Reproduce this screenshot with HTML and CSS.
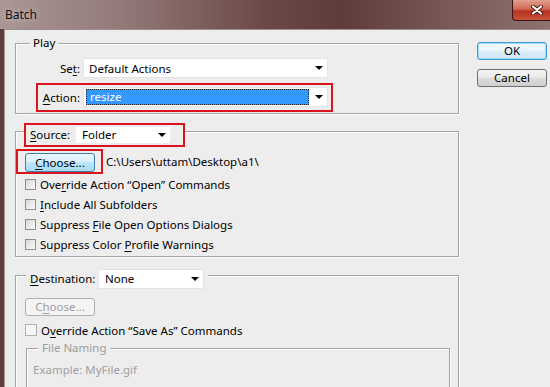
FILE: index.html
```html
<!DOCTYPE html>
<html lang="en">
<head>
  <meta charset="UTF-8" />
  <meta name="viewport" content="width=device-width, initial-scale=1.0" />
  <title>Batch</title>
  <link rel="stylesheet" href="styles.css">
</head>
<body>
  <div class="titlebar">
    <span class="title">Batch</span>
    <span class="close">
      <svg width="12" height="10" viewBox="0 0 12 10">
        <path d="M2 1.5 L10 8.5 M10 1.5 L2 8.5" stroke="#4a1410" stroke-width="4" stroke-linecap="round" />
        <path d="M2 1.5 L10 8.5 M10 1.5 L2 8.5" stroke="#ffffff" stroke-width="2.2" stroke-linecap="round" />
      </svg>
    </span>
  </div>

  <div class="frame">
    <div class="client">
      <div class="main">

        <div class="group play">
          <div class="group-head">Play</div>
          <div class="field set-row">
            <label>Se<u>t</u>:</label>
            <div class="select wide"><span>Default Actions</span><i class="arrow"></i></div>
          </div>
          <div class="field mark action-row">
            <label><u>A</u>ction:</label>
            <div class="select wide"><span class="hl">resize</span><i class="arrow"></i></div>
          </div>
        </div>

        <div class="group source">
          <div class="group-head mark">
            <label class="source-label"><u>S</u>ource:</label>
            <div class="select small"><span>Folder</span><i class="arrow"></i></div>
          </div>
          <div class="choose-row">
            <div class="mark choose-mark">
              <button class="btn focus"><u>C</u>hoose...</button>
            </div>
            <span class="path">C:\Users\uttam\Desktop\a1\</span>
          </div>
          <div class="check"><i class="box"></i><span>Ove<u>r</u>ride Action “Open” Commands</span></div>
          <div class="check"><i class="box"></i><span><u>I</u>nclude All Subfolders</span></div>
          <div class="check"><i class="box"></i><span>Suppress <u>F</u>ile Open Options Dialogs</span></div>
          <div class="check"><i class="box"></i><span>Suppress Color <u>P</u>rofile Warnings</span></div>
        </div>

        <div class="group destination">
          <div class="group-head">
            <label class="dest-label"><u>D</u>estination:</label>
            <div class="select dest"><span>None</span><i class="arrow"></i></div>
          </div>
          <button class="btn disabled">C<u>h</u>oose...</button>
          <div class="check override"><i class="box"></i><span>O<u>v</u>erride Action “Save As” Commands</span></div>
          <div class="group naming">
            <div class="group-head">File Naming</div>
            <div class="example">Example: MyFile.gif</div>
          </div>
        </div>

      </div>

      <div class="side">
        <button class="btn default">OK</button>
        <button class="btn">Cancel</button>
      </div>
    </div>
  </div>
</body>
</html>
```

FILE: styles.css
```css
* {
  box-sizing: border-box;
}

body {
  margin: 0;
  width: 550px;
  height: 387px;
  overflow: hidden;
  font-family: "Noto Sans", "DejaVu Sans", sans-serif;
  font-size: 11.5px;
  color: #000;
  background: #5e3f3d;
  display: flex;
  flex-direction: column;
}

u {
  text-decoration-thickness: 1px;
  text-underline-offset: 2px;
}

.titlebar {
  flex: none;
  height: 29px;
  display: flex;
  align-items: flex-start;
  background: linear-gradient(90deg, #a99695 0%, #927a79 22%, #6c4946 48%, #5f3c39 62%, #7a5957 82%, #8d7270 100%);
}

.title {
  padding: 8px 0 0 5px;
  font-size: 12px;
  line-height: 14px;
  color: #111;
  text-shadow: 0 0 6px rgba(255, 255, 255, 0.6);
}

.close {
  margin-left: auto;
  width: 38px;
  height: 21px;
  padding-left: 10px;
  display: flex;
  align-items: center;
  justify-content: center;
  background: linear-gradient(#e0a08f 0%, #d26a57 45%, #b8321f 55%, #c8523a 100%);
  border: 1px solid #3b1412;
  border-top: none;
  border-right: none;
  border-bottom-left-radius: 4px;
}

.frame {
  flex: 1;
  min-height: 0;
  display: flex;
  padding-left: 4px;
  overflow: hidden;
}

.client {
  flex: 1;
  display: flex;
  align-items: flex-start;
  background: #ededed;
  border-top: 1px solid #9d8d8c;
  border-left: 1px solid #a89b9a;
}

.main {
  flex: none;
  width: 444px;
  margin: 13px 0 0 10px;
}

.side {
  flex: none;
  width: 70px;
  margin: 12px 0 0 18px;
  display: flex;
  flex-direction: column;
  gap: 9px;
}

/* group boxes */

.group {
  border: 1px solid #a3a3a3;
  box-shadow: inset 1px 1px #fff, 1px 1px #fff;
}

.group-head {
  display: flex;
  align-items: center;
  width: fit-content;
  background: #ededed;
  line-height: 14px;
}

.mark {
  border: 2px solid #d9141c;
}

.play {
  padding-bottom: 1px;
}

.play .group-head {
  margin: -8px 0 0 14px;
  padding: 0 3px;
}

.field {
  display: flex;
  align-items: center;
  width: fit-content;
}

.field label {
  width: 41px;
  margin-right: 3px;
  text-align: right;
}

.set-row {
  margin: 8px 0 0 23px;
}

.action-row {
  margin: 5px 0 0 20px;
  padding: 2px 3px 3px 1px;
}

/* dropdowns */

.select {
  display: flex;
  align-items: center;
  height: 20px;
  background: #fff;
  border: 1px solid #e4e4e4;
  padding-left: 5px;
}

.select.wide {
  width: 245px;
}

.select.small {
  width: 94px;
  height: 16px;
  border: none;
  padding-left: 6px;
}

.select.dest {
  width: 106px;
  padding-left: 6px;
}

.arrow {
  margin-left: auto;
  margin-right: 4px;
  width: 0;
  height: 0;
  border-left: 4px solid transparent;
  border-right: 4px solid transparent;
  border-top: 4px solid #000;
}

.hl {
  margin-left: -3px;
  width: 223px;
  height: 16px;
  padding-left: 4px;
  line-height: 15px;
  color: #fff;
  background: #3399ff;
  outline: 1px dotted #222;
  outline-offset: -1px;
}

/* source */

.source {
  margin-top: 17px;
  padding-bottom: 2px;
}

.source .group-head {
  margin: -9px 0 0 8px;
  padding: 2px 13px 2px 4px;
}

.source-label {
  width: 46px;
}

.choose-row {
  display: flex;
  align-items: center;
  margin-top: 2px;
}

.choose-mark {
  padding: 2px 6px 0 7px;
}

.path {
  margin-left: 3px;
}

.check {
  display: flex;
  align-items: center;
  gap: 4px;
  height: 20px;
  margin-left: 9px;
}

.box {
  width: 11px;
  height: 11px;
  border: 1px solid #8e8f8f;
  background: linear-gradient(135deg, #d6d6d6, #fdfdfd);
}

/* buttons */

.btn {
  width: 70px;
  height: 19px;
  padding: 0;
  font: inherit;
  line-height: 16px;
  color: #000;
  border: 1px solid #707070;
  border-radius: 3px;
  background: linear-gradient(#f4f4f4 0%, #ebebeb 45%, #dddddd 50%, #cfcfcf 100%);
}

.btn.focus {
  border-color: #3c7fb1;
  background: linear-gradient(#eaf6fd 0%, #d9f0fc 45%, #bee6fd 50%, #a7d9f5 100%);
}

.btn.default {
  height: 18px;
  border-color: #3c9bd6;
  box-shadow: inset 0 0 0 1px #9ed8f5;
  background: linear-gradient(#f4fafd 0%, #e8f3fa 50%, #dbeef9 51%, #cfe6f5 100%);
}

.side .btn {
  height: 18px;
}

.btn.disabled {
  height: 18px;
  margin: 9px 0 0 9px;
  color: #9f9f9f;
  border-color: #adb2b5;
  background: #f4f4f4;
}

/* destination */

.destination {
  margin-top: 18px;
  padding-bottom: 40px;
}

.destination .group-head {
  margin: -7px 0 0 10px;
  padding: 0 4px;
}

.dest-label {
  width: 68px;
}

.override {
  margin-top: 4px;
}

.override .box {
  width: 12px;
  height: 12px;
  border-color: #b1b1b1;
  background: #f6f6f6;
}

.naming {
  margin: 8px 8px 0 10px;
  padding-bottom: 30px;
}

.naming .group-head {
  margin: -8px 0 0 11px;
  padding: 0 4px;
  color: #9d9d9d;
}

.example {
  margin: 7px 0 0 6px;
  color: #a0a0a0;
}
```
